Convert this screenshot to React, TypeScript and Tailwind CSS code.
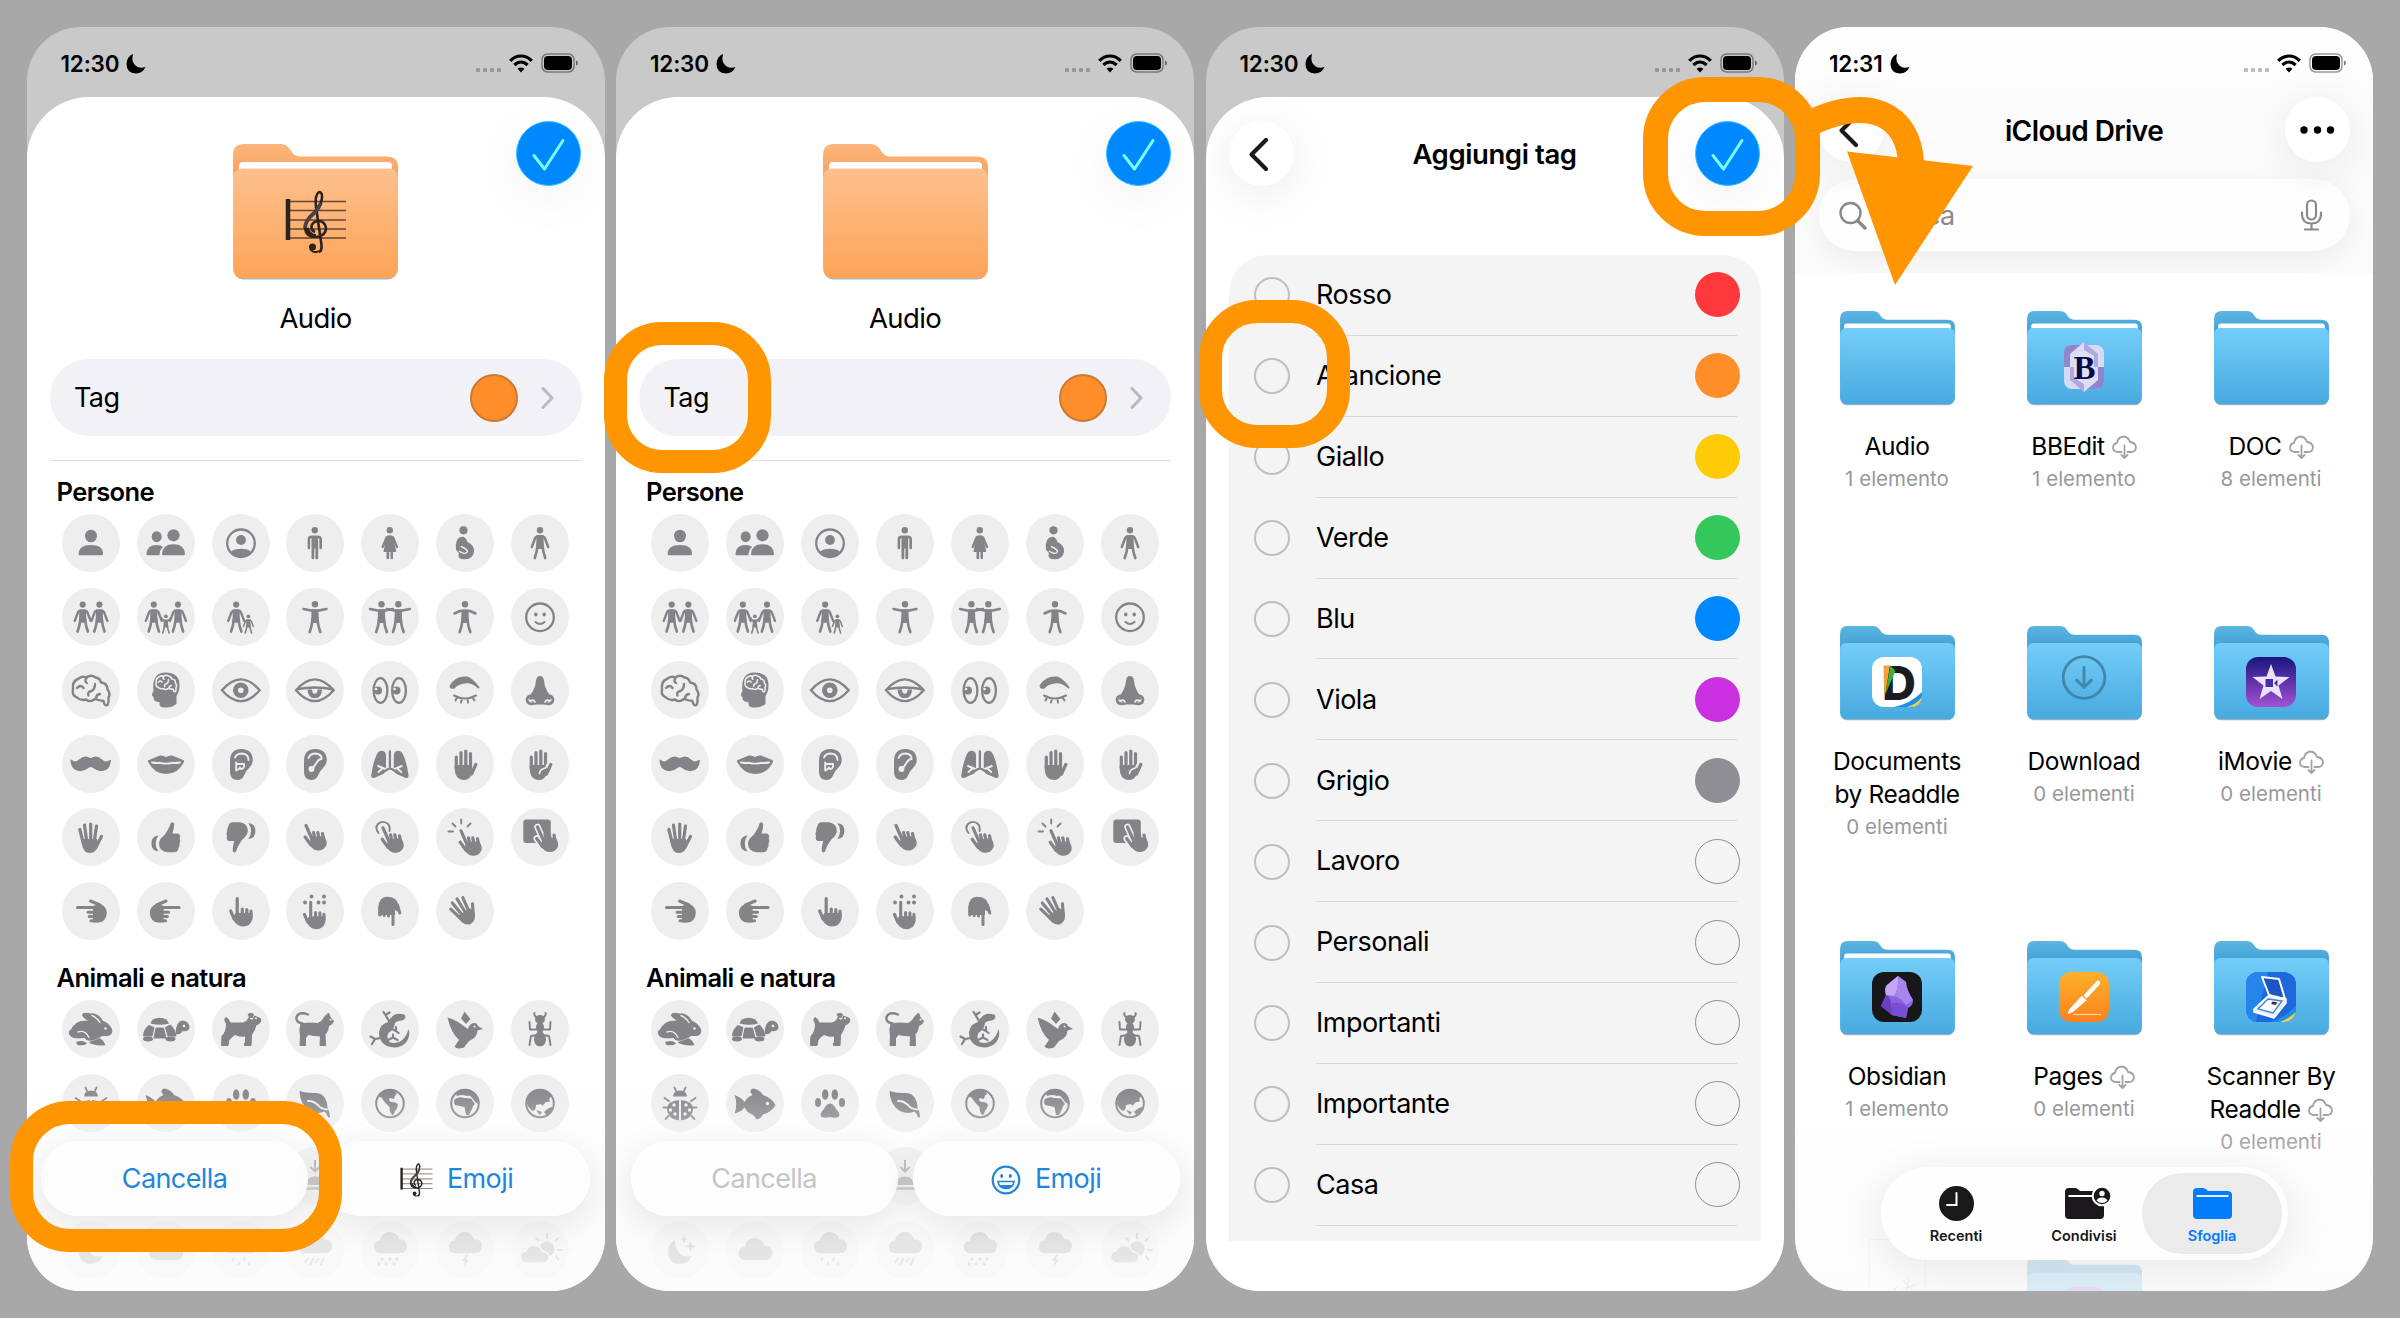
import type { ReactNode } from 'react';

const INK = '#838388';
const DISC = '#eeeeee';

/* ---------- status bar ---------- */

const StatusBar = ({ time }: { time: string }) => (
    <div className="h-[70px] shrink-0 flex items-center justify-between pl-[34px] pr-[26px] pb-[2px] pt-[4px]">
        <div className="flex items-center gap-[7px] pt-[1px]">
            <span className="pt-[2px] text-[22.500px] font-semibold tracking-[-0.2px] leading-none">{time}</span>
            <svg className="w-[20px] h-[20px]" viewBox="0 0 20 20">
                <path d="M7 0Q5 8 9.500 11.500Q13 15 19.500 13Q16.500 19.500 10 19.500Q.5 19 .5 10Q1 2.500 7 0Z" />
            </svg>
        </div>
        <div className="flex items-center gap-[8px]">
            <div className="flex gap-[3px] pt-[13px]">
                {[0, 1, 2, 3].map((i) => (
                    <span key={i} className="w-[4px] h-[4px] rounded-[1px] bg-black/25" />
                ))}
            </div>
            <svg className="w-[24px] h-[19px]" viewBox="0 0 24 19" fill="none" stroke="#000" strokeWidth="3.200">
                <path d="M1.200 6.800Q6 2 12 2T22.800 6.800" />
                <path d="M5.400 11Q8.500 8 12 8T18.600 11" />
                <path d="M12 18.500L8.600 14.800Q12 12 15.400 14.800Z" fill="#000" stroke="none" />
            </svg>
            <svg className="w-[38px] h-[20px]" viewBox="0 0 38 20">
                <rect x="1" y="1" width="32" height="18" rx="5.500" fill="none" stroke="#000" strokeOpacity=".4" strokeWidth="1.500" />
                <rect x="3" y="3" width="28" height="14" rx="4" />
                <path d="M35 7.500V12.500Q37 12 37 10T35 7.500Z" opacity=".5" />
            </svg>
        </div>
    </div>
);

/* ---------- folders ---------- */

const FolderShape = ({ tone, paper }: { tone: 'orange' | 'blue'; paper?: boolean }) => {
    const back = tone === 'orange' ? ['#fbb57b', '#f9a25c'] : ['#5cb5e2', '#3d9ed3'];
    const front = tone === 'orange' ? ['#fec08d', '#fea458'] : ['#74cdf8', '#47aae0'];
    return (
        <svg className="w-full h-full block overflow-visible" viewBox="0 0 165 135">
            <defs>
                <linearGradient id={`back-${tone}`} x1="0" y1="0" x2="0" y2="1">
                    <stop offset="0" stopColor={back[0]} />
                    <stop offset=".35" stopColor={back[1]} />
                </linearGradient>
                <linearGradient id={`front-${tone}`} x1="0" y1="0" x2="0" y2="1">
                    <stop offset="0" stopColor={front[0]} />
                    <stop offset="1" stopColor={front[1]} />
                </linearGradient>
            </defs>
            <rect x="1" y="60" width="163" height="75.500" rx="9" fill="#000" opacity=".3" />
            <path d="M0 11Q0 0 11 0H47Q53 0 56 4L60 9.500Q62.500 12.500 67 12.500H154Q165 12.500 165 23V100H0Z" fill={`url(#back-${tone})`} />
            {paper && <path d="M6 40V22Q6 18 10 18H155Q159 18 159 22V40Z" fill="#fff" />}
            <path d="M0 33Q1 25 9 24.500H156Q164 25 165 33V124Q165 134 155 134H10Q0 134 0 124Z" fill={`url(#front-${tone})`} />
        </svg>
    );
};

const Score = ({ className }: { className: string }) => (
    <svg className={className} viewBox="0 0 62 64" fill="none" stroke="#2b2320">
        <path d="M3 9V50" strokeWidth="4.500" />
        <path d="M4 11.500H61M4 20.500H61M4 30H61M4 39H61M4 48H61" strokeWidth="1.400" strokeOpacity=".75" />
        <path d="M34 62Q37 61 36.500 55L31 17Q29.500 5 34 2Q37.500 2 37 8Q36 16 29 23Q20 31 20 38Q21 47 31 47Q41 46 41 38Q40 31 33 31Q26 32 26.500 38Q27 41 30 42" strokeWidth="2.600" />
        <path d="M36 13Q34 18 29 23Q20 31 20 38" strokeWidth="3.800" stroke="#4b4340" />
        <path d="M22 38Q24 46 31 46" strokeWidth="3.600" />
        <circle cx="27.500" cy="57" r="3.500" fill="#2b2320" stroke="none" />
        <path d="M25 59Q29 64 34 61" strokeWidth="2" />
    </svg>
);

/* ---------- glyphs, each drawn in a 58x58 disc ---------- */

type Arms = 'down' | 'out' | 'half' | 'up';

const armPaths: Record<Arms, string> = {
    down: 'M-8.200 4L-5 -4.500Q-4 -6.700 -1.500 -6.700H1.500Q4 -6.700 5 -4.500L8.200 4',
    out: 'M-11.500 -8L-4 -6.500H4L11.500 -8',
    half: 'M-10.500 -3.500L-5 -6H5L10.500 -3.500',
    up: 'M-7.500 -10.500L-3.500 -5H3.500L7.500 -10.500',
};

const Figure = ({ x = 29, y = 29, s = 1, arms = 'down' }: { x?: number; y?: number; s?: number; arms?: Arms }) => (
    <g transform={`translate(${x} ${y}) scale(${s})`} stroke={INK} fill={INK} strokeLinecap="round" strokeLinejoin="round">
        <circle cy="-12.800" r="3.200" stroke="none" />
        <path d={armPaths[arms]} fill="none" strokeWidth="2.500" />
        <path d="M-3.500 -7.500H3.500L3.800 4L1.500 6H-1.500L-3.800 4Z" stroke="none" />
        <path d="M-2.400 2Q-3 9 -5.300 15M2.400 2Q3 9 5.300 15" fill="none" strokeWidth="2.700" />
    </g>
);

const PointHand = () => (
    <g stroke={INK} fill={INK} strokeLinecap="round" strokeLinejoin="round">
        <path d="M20 17.500L26 31M27.500 24.500L29 31M31.800 24.500L33 31M36.500 25.500L37.500 31M19.200 29L25 37" fill="none" strokeWidth="3.200" />
        <path d="M25 29L38 28Q41.500 33 40.500 37Q38 42.500 32 42.500Q27.500 42.500 23.500 37Z" stroke="none" />
    </g>
);

const UpHand = () => (
    <g stroke={INK} fill={INK} strokeLinecap="round" strokeLinejoin="round">
        <path d="M25.200 16.500V34M30.300 27V34M34.800 27.500V34M39 29V35M18.700 29L22 37" fill="none" strokeWidth="3.200" />
        <path d="M23.500 31H40.500V37Q38.500 44.500 31 44.500Q24 44.500 20.500 36Z" stroke="none" />
    </g>
);

const SideHand = () => (
    <g stroke={INK} fill={INK} strokeLinecap="round" strokeLinejoin="round">
        <path d="M15.500 25.500H34M28.500 19L38 23M26 30.200H34M27.200 34.500H34M29 38.800H36" fill="none" strokeWidth="3" />
        <path d="M31 24L37 21.500Q44.800 24 44.800 31Q44 40.500 36 40.500H31Z" stroke="none" />
    </g>
);

const OpenHand = ({ spread }: { spread?: boolean }) => (
    <g stroke={INK} fill={INK} strokeLinecap="round" strokeLinejoin="round">
        <path
            d={spread
                ? 'M17.800 21.500L21 34M22.500 17L24.500 32M28.700 16V32M34.500 18L32.500 32M39.500 28.500L34 39'
                : 'M20.300 22V33M25 17.500V32M29.800 16V32M34.500 18.500V33M39.800 29.500L35.500 39'}
            fill="none"
            strokeWidth="3.200"
        />
        <path d={spread ? 'M19 31H35L36.500 37Q34 45 28 45Q21 45 19.600 35Z' : 'M18.700 30H36V38Q34 45 28.500 45Q18.700 45 18.700 33Z'} stroke="none" />
    </g>
);

const Ring = () => <circle cx="29" cy="29.300" r="13.800" fill="none" stroke={INK} strokeWidth="2.300" />;

const Brain = () => (
    <g fill="none" strokeLinecap="round" strokeLinejoin="round">
        <path d="M15 36.500Q9.500 34 11 28.500Q10 20 16 18Q20 14.500 24 16.500Q29 13 33.500 16.500Q38 17 39 21.500Q45.500 22 45.500 28.500Q49 33 46.500 36.500Q47 41 45.500 44Q42.500 45.500 41.500 40Q37 39.500 33 38Q28 42 24 38.500Q18.500 40 15 36.500Z" />
        <path d="M15 27Q19 23 21.500 27M24.500 17Q22 20.500 25 22M33 23Q33 28 29.500 30Q25 31 26.500 34.500M34 38Q34 33.500 38 33" />
    </g>
);

const Ear = ({ children }: { children: ReactNode }) => (
    <>
        <path d="M18 26Q18 14 29.500 14Q40.700 14.500 40.700 25Q40.700 30 37 33Q33.500 36 32 40.500Q30 45 25 45Q18 44.500 18 37Z" />
        <g fill="none" stroke={DISC} strokeWidth="1.900" strokeLinecap="round">{children}</g>
    </>
);

const people: ReactNode[] = [
    <>
        <ellipse cx="29" cy="22" rx="6" ry="6.300" />
        <path d="M16.600 40Q17 31 29 31T41 40Q41 41.300 39.500 41.300H18Q16.600 41.300 16.600 40Z" />
    </>,
    <>
        <circle cx="36.500" cy="21.300" r="6.100" />
        <path d="M25 40Q25.500 30.300 36.500 30.300T48 40Q48 41.300 46.500 41.300H26.500Q25 41.300 25 40Z" />
        <ellipse cx="19.700" cy="22.700" rx="5" ry="5.500" />
        <path d="M9.400 40Q10 31 19.500 31Q24 31 26 33Q22.500 36 22.500 41.300H11Q9.400 41.300 9.400 40Z" />
    </>,
    <>
        <Ring />
        <circle cx="29" cy="26" r="4.900" />
        <path d="M19 38Q22 34.800 29 34.800T39 38Q35 43 29 43T19 38Z" />
    </>,
    <>
        <circle cx="28.800" cy="16.300" r="3.200" />
        <path d="M22.900 34V25.500Q22.900 22.800 26 22.800H31.600Q34.700 22.800 34.700 25.500V34" fill="none" stroke={INK} strokeWidth="2.600" strokeLinecap="round" />
        <path d="M25.500 22H32.200V44Q32.200 45.300 30.800 45.300Q29.400 45.300 29.400 44V34.500H28.300V44Q28.300 45.300 26.900 45.300Q25.500 45.300 25.500 44Z" />
    </>,
    <>
        <circle cx="28.800" cy="16.300" r="3.200" />
        <path d="M21.700 33L25.500 23.500Q28.800 21.500 32.100 23.500L36 33" fill="none" stroke={INK} strokeWidth="2.400" strokeLinecap="round" />
        <path d="M25.500 22.500H32L35.300 38H32V44.500Q30.500 46 29.500 44.500V38H28.200V44.500Q27 46 25.500 44.500V38H22.400Z" />
    </>,
    <>
        <circle cx="27.500" cy="16.300" r="4.100" />
        <path d="M21 26Q24 21.500 28 23Q31 25 31.500 28Q38.500 31 38 38Q36.500 45.500 29 45.200Q22 45.500 22.500 41Q24 39 20 36Q19 31 21 26Z" />
        <path d="M23 37Q29 41.500 31.500 37.500Q31.500 35.500 25 32.500" fill="none" stroke={DISC} strokeWidth="1.400" />
    </>,
    <Figure />,
    <><Figure x={20.700} s={0.97} /><Figure x={37.400} s={0.97} /></>,
    <><Figure x={16.800} s={0.97} /><Figure x={41} s={0.97} /><Figure x={28.900} y={36} s={0.6} arms="up" /></>,
    <><Figure x={24.200} s={0.97} /><Figure x={36.400} y={36} s={0.6} /></>,
    <Figure arms="out" />,
    <><Figure x={20.500} arms="out" /><Figure x={37.300} arms="out" /></>,
    <Figure arms="half" />,
    <>
        <Ring />
        <ellipse cx="24.800" cy="26.500" rx="1.700" ry="2.100" />
        <ellipse cx="33.200" cy="26.500" rx="1.700" ry="2.100" />
        <path d="M24.500 34Q29 38 33.500 34" fill="none" stroke={INK} strokeWidth="2" strokeLinecap="round" />
    </>,
    <g stroke={INK} strokeWidth="2.400"><Brain /></g>,
    <>
        <path d="M28 11.500Q42.500 11.500 42.500 24Q42.500 31 39.500 35V43Q33 48 24.500 46Q22 45 22.500 41Q16 41 16.500 36Q13.500 34 16.500 30Q14.500 12 28 11.500Z" />
        <g stroke={DISC} strokeWidth="2.800" transform="translate(13 6) scale(.56)"><Brain /></g>
    </>,
    <>
        <path d="M10 29.300Q28.800 7.500 47.700 29.300Q28.800 51 10 29.300Z" fill="none" stroke={INK} strokeWidth="2.300" />
        <circle cx="28.800" cy="29.300" r="5.300" fill="none" stroke={INK} strokeWidth="5" />
    </>,
    <>
        <path d="M10 29.300Q28.800 7.500 47.700 29.300Q28.800 51 10 29.300ZM10 28.500Q28.800 24.500 47.700 28.500" fill="none" stroke={INK} strokeWidth="2.300" />
        <path d="M23.800 28.500Q24 35 28.800 35T33.800 28.500" fill="none" stroke={INK} strokeWidth="4.500" />
    </>,
    <>
        <ellipse cx="19.500" cy="29.500" rx="6.900" ry="12.400" fill="none" stroke={INK} strokeWidth="2.300" />
        <ellipse cx="38" cy="29.500" rx="6.900" ry="12.400" fill="none" stroke={INK} strokeWidth="2.300" />
        <circle cx="17" cy="29.500" r="4" /><circle cx="35.500" cy="29.500" r="4" />
        <circle cx="15" cy="28" r="1.300" fill={DISC} /><circle cx="33.500" cy="28" r="1.300" fill={DISC} />
    </>,
    <>
        <path d="M14.500 25Q20 15.500 31 16.500Q37 19 42.500 26.500Q36 20.500 29 21.500Q22 22 18 26.500Q14.500 27.500 14.500 25Z" stroke={INK} strokeWidth="2" strokeLinejoin="round" />
        <path d="M18 34.500Q29 40.500 40 34.500M21 36.500L19.500 39.500M26 37.800L25 41.500M31.500 37.800L32 41.500M36.500 36.500L38.500 39.500" fill="none" stroke={INK} strokeWidth="2" strokeLinecap="round" />
    </>,
    <>
        <path d="M28.900 15Q32.500 15 33 20Q34 28 38 33L40 38L34 43.500H24L18 38L20 33Q24 28 25 20Q25.500 15 28.900 15Z" />
        <path d="M23.500 42.500Q16.500 44 16 38.500Q17 34 21 35M34.500 42.500Q41.500 44 42 38.500Q41 34 37 35" fill="none" stroke={INK} strokeWidth="2.800" strokeLinecap="round" />
        <path d="M19.500 39.500Q23 38.500 24 41M38.500 39.500Q35 38.500 34 41" fill="none" stroke={DISC} strokeWidth="1.700" strokeLinecap="round" />
    </>,
    <path d="M8.500 25Q8.500 24 10 25Q13 28 17 24.500Q22 20.500 26 22Q28 23 28.700 23Q29.400 23 31.500 22Q36 20.500 40 24.500Q44 28 47.500 25Q49 24 48.800 26Q48 33 44 35Q37 38 31 33Q28.700 31 26.500 33Q20 38 13.500 35Q9 33 8.500 25Z" />,
    <>
        <path d="M10.700 26Q11 25 13 24.500Q19 22 23 20.500Q26 20 29 22Q32 20 35 20.500Q39 22 45 24.500Q47.500 25 47 27Q41 39 29 39T10.700 26Z" />
        <path d="M15 27.500Q20 28.300 23 27.800Q29 29.500 35 27.800Q39 28.300 43 27.500" fill="none" stroke={DISC} strokeWidth="1.900" strokeLinecap="round" />
    </>,
    <Ear><path d="M23 22.500Q24.500 18.500 30 18.500Q36.500 19 36.500 25M24.200 27.500V35.500M24.200 29H32Q32.500 34 29 34M24.200 35Q27 35 28 32.500" /></Ear>,
    <Ear>
        <path d="M22.500 23Q24 18.500 30 18.500Q36 19.500 35.500 24Q33 24 31 27Q28 32 26 34" />
        <circle cx="25.500" cy="34" r="2" fill={DISC} />
    </Ear>,
    <>
        {['', 'translate(57.800 0) scale(-1 1)'].map((t) => (
            <g key={t} transform={t}>
                <path d="M15.500 20Q17 15.700 21 15.700Q25 16 25 21V35Q24.500 38 21 39.500L13 43Q9.500 43.500 10.400 39.500Q12 28 15.500 20Z" />
                <path d="M17 31L25.500 34.500M17.500 37L22 33" fill="none" stroke={DISC} strokeWidth="1.900" strokeLinecap="round" />
            </g>
        ))}
        <path d="M28.900 16.500V33.500M24.500 35.500L28.900 33L33.300 35.500" fill="none" stroke={INK} strokeWidth="2.300" strokeLinecap="round" />
    </>,
    <OpenHand />,
    <><OpenHand /><path d="M28.500 38.500Q28.500 35 33 33.500Q35.500 33 36 29.500" fill="none" stroke={DISC} strokeWidth="1.700" strokeLinecap="round" /></>,
    <OpenHand spread />,
    <>
        <path d="M27.500 27Q32.500 20 33.500 15.500Q35.500 12.700 37.200 15.800Q37.300 20 35.500 25.500H41Q44.200 27 42.700 30.500Q44 33 42.500 35.500Q43 38.500 41.500 40Q41 44.300 37 44.300H30Q22 43 22 35.500Q22 31 27.500 27Z" />
        <path d="M21.500 27.500Q14.400 28 14.400 35.500T21.500 43.300Q18.700 40 18.700 35.500T21.500 27.500Z" />
    </>,
    <g transform="rotate(180 28.900 29.300)">
        <path d="M27.500 27Q32.500 20 33.500 15.500Q35.500 12.700 37.200 15.800Q37.300 20 35.500 25.500H41Q44.200 27 42.700 30.500Q44 33 42.500 35.500Q43 38.500 41.500 40Q41 44.300 37 44.300H30Q22 43 22 35.500Q22 31 27.500 27Z" />
        <path d="M21.500 27.500Q14.400 28 14.400 35.500T21.500 43.300Q18.700 40 18.700 35.500T21.500 27.500Z" />
    </g>,
    <PointHand />,
    <>
        <g transform="translate(2 2.300)"><PointHand /></g>
        <path d="M17.500 25Q13.500 20 17 16Q21.500 12 26.500 15.500Q29.500 18.500 28.500 23" fill="none" stroke={INK} strokeWidth="1.900" strokeLinecap="round" />
    </>,
    <>
        <g transform="translate(5 5.300)"><PointHand /></g>
        <path d="M12.500 23.500H17M16.500 15.500L19.500 18.500M25.200 11.500V15.500M34.500 15.500L31.500 18.500" fill="none" stroke={INK} strokeWidth="1.900" strokeLinecap="round" />
    </>,
    <>
        <rect x="12.300" y="11.500" width="27.500" height="23.500" rx="3" />
        <g transform="translate(6.500 1.500)" stroke={DISC} strokeLinecap="round"><path d="M20 17.500L26 31M19.200 29L25 37" fill="none" strokeWidth="6.500" /></g>
        <g transform="translate(6.500 1.500)"><PointHand /></g>
    </>,
    <SideHand />,
    <g transform="translate(57.600 0) scale(-1 1)"><SideHand /></g>,
    <UpHand />,
    <>
        <g transform="translate(.5 4.500) scale(.96)"><UpHand /></g>
        {[[25.500, 14.500], [38, 14.500], [19, 20.500], [32.500, 20.500], [38, 20.500]].map(([x, y]) => (
            <circle key={`${x}-${y}`} cx={x} cy={y} r="1.900" />
        ))}
    </>,
    <>
        <path d="M17.400 25Q18 15 26 14.700Q36 15 37 22L39.500 31L34 28V33H17.400Z" />
        <path d="M18.900 25V33M23.200 28V33.500M27.500 28V34M32 27V42.500M36.500 23L38.800 31" fill="none" stroke={INK} strokeWidth="3" strokeLinecap="round" />
    </>,
    <g transform="rotate(-32 29 30) translate(1 -1) scale(.98)"><OpenHand spread /></g>,
];

const Globe = ({ children }: { children: ReactNode }) => (
    <>
        <circle cx="29" cy="29.500" r="13.800" fill="none" stroke={INK} strokeWidth="2" />
        {children}
    </>
);

const Cloud = ({ y = 0, s = 1 }: { y?: number; s?: number }) => (
    <path transform={`translate(${29 - 29 * s} ${y}) scale(${s})`} d="M20 39Q12.500 39 12.500 32.500Q12.500 26.500 18.500 26Q20 17.500 28 17Q36 17 38.500 24.500Q46.500 24.500 46.500 32Q46 39 39 39Z" />
);

const nature: ReactNode[] = [
    <>
        <path d="M8 35Q6 31 9.500 29.500Q12 23.500 19 21.500Q26 20 31 22.500Q24 20 21 16.500Q19 12.500 26 13.500Q34 14.500 39 21Q46 22 49.500 29Q51 35 45 35.500H40Q36 39 30 40Q25 41 22.500 37.500Q10 39 8 35Z" stroke={INK} strokeLinejoin="round" />
        <path d="M29 14.500Q35 17 38.500 22.500Q41 23 41 21Q38 14.500 30 13Z" />
        <path d="M16 32Q23 29.500 27 37.500M30 15.500Q35.500 18 38 22.500" fill="none" stroke={DISC} strokeWidth="1.400" strokeLinecap="round" />
        <path d="M15 42.500Q21 40.500 24 43.500Q22 45 16 44.500ZM28 42.500L38 39Q41 41 42.500 44.500Q36 45.500 28 42.500Z" stroke={INK} strokeWidth="1.500" strokeLinejoin="round" />
        <circle cx="43.500" cy="28.500" r="1.200" fill={DISC} />
    </>,
    <>
        <path d="M13.500 23.500Q15 18 22.500 17.800Q30 18 32 23.500Q23 26 13.500 23.500Z" />
        <path d="M12 25.500L17 27.500L15 36H6.500Q7 29 12 25.500ZM19 28H26.500L29 38H17ZM28.500 27.500L33.500 25Q38 29 39 36H31Z" stroke={INK} strokeWidth="1" strokeLinejoin="round" />
        <path d="M38.500 34Q38.500 21.500 45.500 20.500Q52.500 21 52.500 28Q51 32 45.500 31Q43.500 35 38.500 34Z" />
        <ellipse cx="11" cy="39" rx="5" ry="2.400" /><ellipse cx="33.500" cy="39" rx="5" ry="2.400" />
        <circle cx="47" cy="26" r="1.300" fill={DISC} />
    </>,
    <>
        <path d="M14.500 24Q11.500 19 14 17.500Q17 18.500 18 23H31Q35.500 22 37 17.500L38.500 20L41 20L42.500 16L48.500 18.500Q50 23 44 25Q43 30 39.500 35L39 45.500H32.500V43L33.500 42.500V36Q27 37 23 34.500Q19 37 17 40L16 45.500H9.500L10 36Q14.500 32 14.500 24Z" stroke={INK} strokeLinejoin="round" />
        <path d="M35.500 14Q40 12 42 14.500L40.500 18H37.500Z" />
        <circle cx="44" cy="18.300" r="1" fill={DISC} />
    </>,
    <>
        <path d="M22 14.500Q13 11 10.500 17Q9.500 22.500 16.500 23.500" fill="none" stroke={INK} strokeWidth="2.400" strokeLinecap="round" />
        <path d="M15 24Q21 22.500 32 23.500Q37 21 38.500 17L42.500 13L44.500 18L47.500 21Q47 24 42.500 26Q42.500 31 39 34.500L39.500 45.500H34L34.500 36Q26 35.500 22.500 34.500L19.500 38V45.500H14L14.500 36Q13 29 15 24Z" stroke={INK} strokeLinejoin="round" />
        <circle cx="44.500" cy="19.800" r="1" fill={DISC} />
    </>,
    <>
        <path d="M27 22Q29 18 33 15Q38 12.500 44 15Q45.500 18.500 41 20.500Q36 20.500 34 23Q33.500 29 27.500 33Q25 38 28.500 42Q34 44.500 40 41Q45.500 37 47.500 29Q50 36 44.500 43Q37 50 26 46Q17.500 42 18 32Q19.500 24 27 22Z" />
        <path d="M28 21L24.500 15L22.500 12M24.500 15L28.500 12.500M31 29L35 31L35 27M35 31L37.500 33M20 38L14 39M14 39L9.500 36.500M14 39L11 44M27 40L32 37.500L36.500 40M32 37.500V34.500" fill="none" stroke={INK} strokeWidth="2.200" strokeLinecap="round" strokeLinejoin="round" />
    </>,
    <>
        <path d="M11.500 17.500Q22 21 27 25.500L32 29Q33 24 37.500 23Q41 22.500 42 26L47 29L41.500 30.500Q41 38 33 41L28 47.500Q21 50 18.500 46.500L23 40Q15 33 11.500 17.500Z" />
        <path d="M25 18.500L28.500 11.500L34.500 19L30 24Z" />
        <circle cx="38.500" cy="26.500" r="1" fill={DISC} />
    </>,
    <>
        <path d="M29 15Q34 15 34 20Q33 22.500 31.500 23.500Q34.500 26 31.500 32Q35.500 36 35 40Q34 46.500 29 46.500T23 40Q22.500 36 26.500 32Q23.500 26 26.500 23.500Q25 22.500 24 20Q24 15 29 15Z" />
        <path d="M25 17Q22.500 15 23.500 13M33 17Q35.500 15 34.500 13M26 29.500H19L18.500 22M32 29.500H39L39.500 22M26 35L20 36L18.500 45M32 35L38 36L39.500 45" fill="none" stroke={INK} strokeWidth="1.900" strokeLinecap="round" strokeLinejoin="round" />
    </>,
    <>
        <path d="M22 22.500Q22.500 16.500 29 16.500T36 22.500ZM15.800 35Q16 27 28 26V46.500Q16.500 45 15.800 35ZM42.200 35Q42 27 30 26V46.500Q41.500 45 42.200 35Z" />
        <path d="M25 17L23.500 13.500M33 17L34.500 13.500M18 27L13.500 24M40 27L44.500 24M16 33.500H12.500M42 33.500H45.500M17.500 42L14.500 45M40.500 42L43.500 45" fill="none" stroke={INK} strokeWidth="1.800" strokeLinecap="round" />
        {[[23, 31], [19.500, 36], [24, 40], [35, 31], [38.500, 36], [34, 40]].map(([x, y]) => (
            <circle key={`${x}-${y}`} cx={x} cy={y} r="1.700" fill={DISC} />
        ))}
    </>,
    <>
        <path d="M8.500 21Q16 24 18.500 28Q21 23 26.500 21Q22 16.500 27 14.500Q34 15.500 37 21Q46 24 49.500 31Q46 38 37 40.500Q34 46 30 45Q29 41 24 39.500Q20 37 18.500 33.500Q15 38 8.500 39.500Q12 30 8.500 21Z" />
        <circle cx="41.500" cy="29.500" r="1.700" fill={DISC} />
    </>,
    <>
        <path d="M29 29.500Q33 30 35 35Q39.500 39 38 42.500Q36 44.500 29 43Q22 44.500 20 42.500Q18.500 39 23 35Q25 30 29 29.500Z" />
        <ellipse cx="24.200" cy="20.500" rx="3.200" ry="5.300" /><ellipse cx="33.800" cy="20.500" rx="3.200" ry="5.300" />
        <ellipse cx="17" cy="28.500" rx="3" ry="4.500" /><ellipse cx="41" cy="28.500" rx="3" ry="4.500" />
    </>,
    <>
        <path d="M13.500 17Q20 19.500 30 19Q41 20 41.500 34Q43.500 37 44 43Q42.500 44.500 41.500 42Q40.500 38.500 38.500 37.500Q32 40.500 24 37Q14 31 13.500 17Z" />
        <path d="M22 27Q27 26.500 32 31Q35 35 41 35.500" fill="none" stroke={DISC} strokeWidth="1.900" strokeLinecap="round" />
    </>,
    <Globe><path d="M17 22Q22 14.500 32 16L36 19.500Q33 22 33 25L28.500 24Q27 27 31 28Q36 28 37 31Q36 35 34 37Q33 41 31 41Q28 37 28.500 33Q23 28 21 24Z" /></Globe>,
    <Globe><path d="M20 20Q26 13.500 35 16.500Q42 20 42 30Q39 29 37 25Q34 20 31 22Q26 20 21 22ZM19 25Q24 22 28 24L35 24.500L39 30Q36 32 36 35L33 41H30L28.500 33Q24 32 19 31Q17 28 19 25Z" /></Globe>,
    <Globe><path d="M15.500 29Q16 15.500 29 15.500Q37 16 41 22Q37 24 39 28Q35 27 33 30Q31 33 30 30L25 31Q25 36 22 37Q18 35 15.500 29ZM25 36L31 38L29 41ZM33 38Q38 33 42 33Q41 40 36 42Z" /></Globe>,
    null,
    null,
    null,
    <>
        <path d="M29 13V24M24.500 20L29 24.500L33.500 20" fill="none" stroke={INK} strokeWidth="2" />
        <path d="M20.500 38Q20.500 29.500 29 29.500T37.500 38Z" />
        <path d="M14 41.500H44" stroke={INK} strokeWidth="2.500" />
    </>,
    null,
    null,
    null,
    <>
        <path d="M24 19Q17 23 17 31Q18 43 29 43Q37 43 40.500 35Q25 38 24 19Z" />
        <path d="M33 14L34.200 17L37 18L34.200 19L33 22L31.800 19L29 18L31.800 17ZM39.500 20L41 24L45 25.500L41 27L39.500 31L38 27L34 25.500L38 24Z" />
    </>,
    <Cloud />,
    <><Cloud y={-5.500} s={0.97} /><path d="M22 37L20 40M27.500 41L26 44M33 37L31.500 40M38 41L36.500 44" stroke={INK} strokeWidth="1.700" /></>,
    <><Cloud y={-5.500} s={0.97} /><path d="M22 37L19 42M27.500 37L24 44M33 37L29.500 42M38 37L34.500 44" stroke={INK} strokeWidth="1.700" /></>,
    <>
        <Cloud y={-5.500} s={0.97} />
        {[[21, 38], [29, 38], [36, 38], [18, 43], [25, 43], [33, 43]].map(([x, y]) => <circle key={`${x}-${y}`} cx={x} cy={y} r="1.700" />)}
    </>,
    <><Cloud y={-5.500} s={0.97} /><path d="M30 34L25.500 40H29L27.500 45.500L33 38.500H29.500L32 34Z" /></>,
    <>
        <circle cx="36" cy="28" r="7.500" />
        <path d="M36 17V13M44.500 20L47.500 17M47 29H51M45 35.500L47.500 38.500M27.500 19.500L25 17" stroke={INK} strokeWidth="2" strokeLinecap="round" />
        <path d="M16 42Q9.500 41.500 9.500 35.500Q10 30.500 15 30Q17 24 23.500 24.500Q30 25 31.500 30.500Q38 31 38 36.500Q37.500 42 31.500 42Z" stroke={DISC} strokeWidth="1.500" />
    </>,
];

const GlyphGrid = ({ glyphs }: { glyphs: ReactNode[] }) => (
    <div className="ml-[27px] w-[524px] grid grid-cols-7 auto-rows-[73.500px] justify-items-center">
        {glyphs.map((glyph, i) => (
            <div key={i} className="w-[58px] h-[58px] rounded-full bg-[#eeeeee]">
                <svg className="w-full h-full" viewBox="0 0 58 58" fill={INK}>{glyph}</svg>
            </div>
        ))}
    </div>
);

/* ---------- shared controls ---------- */

const CheckButton = () => (
    <div className="w-[65px] h-[65px] rounded-full bg-[#0088ff] border border-[#2fc0ff] shadow-[0_12px_40px_8px_rgba(0,0,0,0.04)]">
        <svg viewBox="0 0 63 63" fill="none" stroke="#7dfcff" strokeWidth="3" strokeLinecap="round" strokeLinejoin="round">
            <path d="M17 33.500L27.500 47L46 18.500" />
        </svg>
    </div>
);

const RoundButton = ({ children }: { children: ReactNode }) => (
    <div className="w-[65px] h-[65px] rounded-full bg-white shadow-[0_8px_40px_8px_rgba(0,0,0,0.055)]">
        <svg viewBox="0 0 65 65">{children}</svg>
    </div>
);

const backChevron = <path d="M37 19L22.500 33.500L37 48" fill="none" stroke="#1a1a1a" strokeWidth="4.200" strokeLinecap="round" strokeLinejoin="round" />;

const Phone = ({ time, light, children }: { time: string; light?: boolean; children: ReactNode }) => (
    <div className={`relative w-[578px] h-[1264px] shrink-0 rounded-[54px] overflow-hidden flex flex-col ${light ? 'bg-white' : 'bg-[#c9c9c9]'}`}>
        {light && <div className="absolute inset-x-0 top-0 h-[246px] bg-gradient-to-b from-[#fdfdfd] to-[#fafafa]" />}
        <div className="relative">
            <StatusBar time={time} />
        </div>
        {children}
    </div>
);

const SectionTitle = ({ children }: { children: ReactNode }) => (
    <h2 className="h-[45px] pl-[30px] pt-[2px] flex items-center text-[25.500px] font-semibold tracking-[-0.6px]">{children}</h2>
);

/* ---------- screens ---------- */

const IconPicker = ({ selected }: { selected?: boolean }) => (
    <Phone time="12:30">
        <div className="relative flex-1 rounded-t-[62px] bg-white">
            <div className="absolute right-[23.500px] top-[24px]">
                <CheckButton />
            </div>
            <div className="h-[262px] pt-[47px] flex flex-col items-center">
                <div className="relative w-[165px] h-[135px]">
                    <FolderShape tone="orange" paper />
                    {selected && <Score className="absolute left-[52px] top-[46px] w-[62px] h-[64px]" />}
                </div>
                <div className="mt-[20px] text-[27.500px] leading-[38px] tracking-[-0.6px]">Audio</div>
            </div>
            <div className="mx-[23px] h-[77px] rounded-[38px] bg-[#f2f1f6] flex items-center pl-[24.500px] pr-[28px]">
                <span className="pt-[2px] text-[27px] tracking-[-0.6px]">Tag</span>
                <span className="ml-auto w-[48px] h-[48px] rounded-full bg-[#ff8d2a] border-2 border-[#cc7a33]" />
                <svg className="ml-[23px] w-[13px] h-[24px]" viewBox="0 0 13 24" fill="none" stroke="#b9b9be" strokeWidth="3" strokeLinecap="round" strokeLinejoin="round">
                    <path d="M2 2.500L11 12L2 21.500" />
                </svg>
            </div>
            <div className="mx-[23px] mt-[24px] mb-[8px] h-px bg-[#dfdfe1]" />
            <SectionTitle>Persone</SectionTitle>
            <GlyphGrid glyphs={people} />
            <SectionTitle>Animali e natura</SectionTitle>
            <GlyphGrid glyphs={nature} />
        </div>
        <div className="absolute inset-x-0 bottom-0 h-[210px] bg-gradient-to-b from-white/0 via-[#fafafa]/60 via-45% to-[#fbfbfb]/82 to-75%" />
        <div className="absolute inset-x-0 bottom-0 h-[150px] pl-[14.500px] flex gap-[15px] text-[27px] tracking-[-0.6px] text-[#1f86dc]">
            <div className={`w-[267px] h-[75px] pt-[2px] rounded-full bg-[#fdfdfd]/95 border border-white shadow-[0_10px_34px_4px_rgba(0,0,0,0.07)] flex items-center justify-center ${selected ? '' : 'text-[#c4c4c6]'}`}>
                Cancella
            </div>
            <div className="w-[267px] h-[75px] pt-[2px] rounded-full bg-[#fdfdfd]/95 border border-white shadow-[0_10px_34px_4px_rgba(0,0,0,0.07)] flex items-center justify-center gap-[14px]">
                {selected ? (
                    <Score className="w-[33px] h-[36px]" />
                ) : (
                    <svg className="w-[30px] h-[30px]" viewBox="0 0 30 30" fill="none" stroke="#1f86dc" strokeWidth="2.200">
                        <circle cx="15" cy="15" r="13.300" />
                        <ellipse cx="10.700" cy="11" rx="1.500" ry="2" fill="#1f86dc" stroke="none" />
                        <ellipse cx="19.300" cy="11" rx="1.500" ry="2" fill="#1f86dc" stroke="none" />
                        <path d="M7 16.500H23Q22 23.500 15 23.500T7 16.500Z" strokeWidth="1.700" />
                        <path d="M8.500 20H21.500Q19 23.500 15 23.500T8.500 20Z" fill="#1f86dc" stroke="none" />
                    </svg>
                )}
                <span>Emoji</span>
            </div>
        </div>
    </Phone>
);

const tags = [
    { name: 'Rosso', color: 'bg-[#ff383c]' },
    { name: 'Arancione', color: 'bg-[#ff8d28]' },
    { name: 'Giallo', color: 'bg-[#fecb05]' },
    { name: 'Verde', color: 'bg-[#34c759]' },
    { name: 'Blu', color: 'bg-[#0088ff]' },
    { name: 'Viola', color: 'bg-[#cb30e0]' },
    { name: 'Grigio', color: 'bg-[#8e8e93]' },
    { name: 'Lavoro' },
    { name: 'Personali' },
    { name: 'Importanti' },
    { name: 'Importante' },
    { name: 'Casa' },
];

const TagList = () => (
    <Phone time="12:30">
        <div className="flex-1 rounded-t-[62px] bg-white">
            <div className="h-[158px] pt-[24px] px-[23.500px] flex items-start justify-between">
                <RoundButton>{backChevron}</RoundButton>
                <h1 className="h-[65px] pt-[2px] flex items-center text-[27.500px] font-semibold tracking-[-0.4px]">Aggiungi tag</h1>
                <CheckButton />
            </div>
            <ul className="mx-[23px] h-[986px] rounded-t-[38px] bg-[#f4f4f4]">
                {tags.map((tag) => (
                    <li key={tag.name} className="h-[80.900px] pl-[25.500px] flex items-center">
                        <span className="w-[36px] h-[36px] rounded-full border-[2.500px] border-[#bfbfc2]" />
                        <div className="ml-[26px] mr-[24px] h-full flex-1 flex items-center justify-between border-b border-[#d8d8da]">
                            <span className="pt-[1px] text-[27px] tracking-[-0.5px]">{tag.name}</span>
                            <span className={`-mr-[3px] w-[45px] h-[45px] rounded-full ${tag.color ?? 'border-[1.500px] border-[#8e8e93]'}`} />
                        </div>
                    </li>
                ))}
            </ul>
        </div>
    </Phone>
);

const CloudDown = () => (
    <svg className="inline-block ml-[7px] w-[25px] h-[24px] align-[-4px]" viewBox="0 0 25 24" fill="none" stroke="#a2a2a5" strokeWidth="1.800" strokeLinecap="round" strokeLinejoin="round">
        <path d="M9.500 17H5.500Q1 16.500 1 12.500Q1.500 8.500 5 8Q6 2 11.500 1.500Q16.500 2 18 7Q23.500 7.500 24 12.500Q23.500 17 19 17H15.500M12.500 10.500V23M9.500 20L12.500 23L15.500 20" />
    </svg>
);

const BBEditIcon = () => (
    <svg className="overflow-visible" viewBox="0 0 50 50">
        <rect x="5" y="3" width="40" height="44" rx="8" fill="#d8d9f4" />
        <path d="M25 3H13Q5 3 5 11V25H25ZM25 47H37Q45 47 45 39V25H25Z" fill="#8f86cf" />
        <path d="M25 0L39 12V38L25 50L11 38V12Z" fill="#dcdcf5" />
        <path d="M25 0L39 12V25H25ZM25 50L11 38V25H25Z" fill="#b0a9e0" />
        <path d="M25 8L35 14V36L25 42L15 36V14Z" fill="#dfdff7" />
        <text x="25.500" y="36.500" textAnchor="middle" className="font-['Liberation_Serif',serif] font-bold" fontSize="33" fill="#0b0b4a">B</text>
    </svg>
);

const DocumentsIcon = () => (
    <svg className="overflow-visible" viewBox="0 0 50 50">
        <rect width="50" height="50" rx="12" fill="#fff" />
        <text x="27" y="42.500" textAnchor="middle" className="font-['Inter',sans-serif] font-extrabold" fontSize="47" fill="#1c1b20">D</text>
        <path d="M11.500 8.500H18L13.500 36L12 38Z" fill="#f5a23c" />
        <path d="M18.500 8.500L23.500 14L13 38Z" fill="#3fae35" />
        <path d="M22 50Q38 47 50 35V38Q50 50 38 50Z" fill="#1e8fe8" />
        <path d="M35 50Q45 47 50 40Q49 50 38 50Z" fill="#f2cf4a" />
    </svg>
);

const DownloadIcon = () => (
    <svg className="overflow-visible" viewBox="0 0 50 50" fill="none" stroke="#3f87ab" strokeWidth="2.800" strokeLinecap="round" strokeLinejoin="round">
        <circle cx="25" cy="20.500" r="20.800" />
        <path d="M25 10.500V30M17.500 23L25 30.500L32.500 23" />
    </svg>
);

const IMovieIcon = () => (
    <svg viewBox="0 0 50 50">
        <defs>
            <linearGradient id="imovie" x1="0" y1="0" x2="0" y2="1">
                <stop offset="0" stopColor="#1a1580" /><stop offset="1" stopColor="#a252d2" />
            </linearGradient>
        </defs>
        <rect width="50" height="50" rx="12" fill="url(#imovie)" />
        <path d="M25 7L29.500 19.500L43.500 20L32.500 28.500L36.500 42L25 34L13.500 42L17.500 28.500L6.500 20L20.500 19.500Z" fill="#ece2fa" />
        <path d="M19.500 22H27V30H19.500ZM28 26L31.500 22.500V29.500Z" fill="#4a2ba6" />
    </svg>
);

const ObsidianIcon = () => (
    <svg viewBox="0 0 50 50">
        <rect width="50" height="50" rx="12" fill="#17171a" />
        <path d="M26 4L34 10Q34 17 41 28Q41 34 36 36L34 46L20 43L9 34L14 23Q12 16 15 13Z" fill="#8e63e0" />
        <path d="M26 4Q27 17 22 24L14 23Q12 16 15 13Z" fill="#c4a5f7" />
        <path d="M26 4L34 10Q34 17 41 28L34 33Q29 26 22 24Q27 17 26 4Z" fill="#a785ee" />
        <path d="M14 23Q20 25 20 43L9 34Z" fill="#6a3fc0" />
        <path d="M20 31Q30 29 36 36L34 46L20 43Z" fill="#7a4dd4" />
    </svg>
);

const PagesIcon = () => (
    <svg viewBox="0 0 50 50">
        <defs>
            <linearGradient id="pages" x1="0" y1="0" x2="0" y2="1">
                <stop offset="0" stopColor="#ffb02b" /><stop offset="1" stopColor="#fb821d" />
            </linearGradient>
        </defs>
        <rect width="50" height="50" rx="12" fill="url(#pages)" />
        <path d="M39 11L27 24" stroke="#fff" strokeWidth="4.500" strokeLinecap="round" />
        <path d="M23 23.500L28 28L14 40L8.500 42L10.500 37Z" fill="#fff" />
        <path d="M22.500 22.500L29 28.500" stroke="#fb9a25" strokeWidth="1.200" />
        <path d="M14 42.500H42" stroke="#ffd9a0" strokeWidth="1.200" />
    </svg>
);

const ScannerIcon = () => (
    <svg viewBox="0 0 50 50">
        <clipPath id="scan-clip"><rect width="50" height="50" rx="12" /></clipPath>
        <g clipPath="url(#scan-clip)">
            <rect width="50" height="50" fill="#1f67dc" />
            <path d="M0 0H22L10 50H0Z" fill="#2585ea" />
            <path d="M24 50Q38 46 50 34V50Z" fill="#1e8fe8" />
            <path d="M34 50Q42 47 50 40V50Z" fill="#f2cf4a" />
            <path d="M16 5L33 7L39 27L23 23Z" fill="#1b56c4" stroke="#fff" strokeWidth="2" strokeLinejoin="round" />
            <path d="M22 24L40 27V31L28 46L8 40V37Z" fill="#eaf1fb" stroke="#fff" strokeWidth="1.500" strokeLinejoin="round" />
            <path d="M22 27L36 29L27 41L12 37Z" fill="#fff" stroke="#3b82d8" strokeWidth="1.300" />
            <path d="M26.500 29.500L31.500 30.500L29.500 33L25 32Z" fill="#3a2f35" />
        </g>
    </svg>
);

const files: { lines: string[]; info: string; cloud?: boolean; paper?: boolean; icon?: ReactNode }[] = [
    { lines: ['Audio'], info: '1 elemento', paper: true },
    { lines: ['BBEdit'], info: '1 elemento', cloud: true, paper: true, icon: <BBEditIcon /> },
    { lines: ['DOC'], info: '8 elementi', cloud: true, paper: true },
    { lines: ['Documents', 'by Readdle'], info: '0 elementi', icon: <DocumentsIcon /> },
    { lines: ['Download'], info: '0 elementi', icon: <DownloadIcon /> },
    { lines: ['iMovie'], info: '0 elementi', cloud: true, icon: <IMovieIcon /> },
    { lines: ['Obsidian'], info: '1 elemento', paper: true, icon: <ObsidianIcon /> },
    { lines: ['Pages'], info: '0 elementi', cloud: true, icon: <PagesIcon /> },
    { lines: ['Scanner By', 'Readdle'], info: '0 elementi', cloud: true, icon: <ScannerIcon /> },
];

const FileTile = ({ file }: { file: (typeof files)[number] }) => (
    <div className="flex flex-col items-center text-center">
        <div className="relative w-[115px] h-[94px]">
            <FolderShape tone="blue" paper={file.paper} />
            {file.icon && <div className="absolute left-[32.500px] top-[31px] w-[50px] h-[50px]">{file.icon}</div>}
        </div>
        <div className="mt-[25px] text-[24.500px] leading-[33px] tracking-[-0.4px] whitespace-nowrap">
            {file.lines.map((line, i) => (
                <div key={line}>
                    {line}
                    {file.cloud && i === file.lines.length - 1 && <CloudDown />}
                </div>
            ))}
        </div>
        <div className="text-[20.500px] leading-[31px] text-[#98989c]">{file.info}</div>
    </div>
);

const FolderTab = ({ color, line }: { color: string; line: string }) => (
    <>
        <path d="M0 5Q0 1 4 1H10Q12 1 13.500 2.500L15 4H35Q39 4.500 39 8V28Q39 32 35 32H4Q0 32 0 28Z" fill={color} />
        <path d="M3.500 9H35.500" stroke={line} strokeWidth="2" />
    </>
);

const Browser = () => (
    <Phone time="12:31" light>
        <div className="relative h-[176px] px-[23.500px]">
            <div className="flex items-center justify-between">
                <RoundButton>{backChevron}</RoundButton>
                <h1 className="h-[65px] pt-[2px] flex items-center text-[28px] font-semibold tracking-[-0.6px]">iCloud Drive</h1>
                <RoundButton>
                    <circle cx="19" cy="33" r="3.700" /><circle cx="32.500" cy="33" r="3.700" /><circle cx="45.500" cy="33" r="3.700" />
                </RoundButton>
            </div>
            <div className="mt-[17px] h-[72px] rounded-full bg-[#fefefe] shadow-[0_8px_24px_2px_rgba(0,0,0,0.05)] flex items-center pl-[20px] pr-[27px] text-[#8a8a8d]">
                <svg className="w-[28px] h-[29px]" viewBox="0 0 28 29" fill="none" stroke="#8a8a8d" strokeLinecap="round">
                    <circle cx="11.500" cy="12" r="10" strokeWidth="2.400" />
                    <path d="M19 20L26 27" strokeWidth="3.400" />
                </svg>
                <span className="ml-[15px] pt-[2px] text-[27px] tracking-[-0.6px]">Cerca</span>
                <svg className="ml-auto w-[23px] h-[32px]" viewBox="0 0 23 32" fill="none" stroke="#8a8a8d" strokeWidth="2.200" strokeLinecap="round">
                    <rect x="7" y="1.500" width="9" height="19" rx="4.500" />
                    <path d="M2 13.500V16Q2.500 24.500 11.500 24.500T21 16V13.500M11.500 25V30M5 30.500H18" />
                </svg>
            </div>
        </div>
        <div className="relative h-[1018px] pt-[38px] px-[8.500px] grid grid-cols-3 auto-rows-[315px] overflow-hidden">
            {files.map((file) => <FileTile key={file.lines[0]} file={file} />)}
            {/* next row, fading out behind the tab bar */}
            <div className="ml-[65px] -mt-[17px] w-[57px] h-[70px] border border-[#e4e4e4] opacity-70">
                <svg className="w-full h-full" viewBox="0 0 57 70" fill="none" stroke="#b5b5b8"><path d="M22 54L30 47M26 50V60M34 42L46 54M40 40L38 56M34 50L48 46" /></svg>
            </div>
            <div className="relative mx-auto w-[115px] h-[94px] opacity-70">
                <FolderShape tone="blue" />
                <div className="absolute left-[35px] top-[31px] w-[45px] h-[50px] rounded-[12px] bg-[#b06fc0]" />
            </div>
        </div>
        <div className="absolute inset-x-0 bottom-0 h-[170px] bg-gradient-to-b from-white/0 via-[#fbfbfb]/60 to-[#fbfbfb]/70" />
        <nav className="absolute left-[85.500px] bottom-[31px] w-[407px] h-[93px] rounded-full bg-[#fefefe] shadow-[0_8px_40px_6px_rgba(0,0,0,0.07)] flex items-center pl-[5.500px] text-[14.500px] font-semibold text-[#161616]">
            <div className="shrink-0 w-[140px] h-[81px] flex flex-col items-center pt-[13px]">
                <svg className="w-[35px] h-[35px]" viewBox="0 0 35 35">
                    <circle cx="17.500" cy="17.500" r="17.500" fill="#1a181a" />
                    <path d="M17.500 7V19H8" fill="none" stroke="#fff" strokeWidth="2" strokeLinecap="round" />
                </svg>
                <span className="mt-[6px] leading-[18px]">Recenti</span>
            </div>
            <div className="-ml-[12px] shrink-0 w-[140px] h-[81px] flex flex-col items-center pt-[13px]">
                <svg className="ml-[8px] w-[46px] h-[35px] overflow-visible" viewBox="0 0 46 35">
                    <g transform="translate(0 1)"><FolderTab color="#1a181a" line="#fff" /></g>
                    <circle cx="37" cy="10" r="9.300" fill="#1a181a" stroke="#fff" strokeWidth="2" />
                    <circle cx="37" cy="7.500" r="2.700" fill="#fff" />
                    <path d="M31.500 14.500Q33 11.500 37 11.500T42.500 14.500Q40 17 37 17T31.500 14.500Z" fill="#fff" />
                </svg>
                <span className="mt-[6px] leading-[18px]">Condivisi</span>
            </div>
            <div className="-ml-[12px] shrink-0 w-[140px] h-[81px] rounded-full bg-[#ebebeb] flex flex-col items-center pt-[13px] text-[#007aff]">
                <svg className="w-[39px] h-[35px]" viewBox="0 0 39 35"><g transform="translate(0 1)"><FolderTab color="#007dfb" line="#e4f1fd" /></g></svg>
                <span className="mt-[6px] leading-[18px]">Sfoglia</span>
            </div>
        </nav>
    </Phone>
);

const App = () => (
    <div className="relative w-[2400px] h-[1318px] overflow-hidden bg-[#a8a8a8] pl-[26.500px] pt-[27px] flex gap-[11.500px] font-['Inter',sans-serif] text-black">
        <IconPicker selected />
        <IconPicker />
        <TagList />
        <Browser />

        {/* callouts */}
        <div className="absolute left-[10px] top-[1101px] w-[332px] h-[151px] rounded-[60px] border-[23px] border-[#ff9500]" />
        <div className="absolute left-[604px] top-[322px] w-[167px] h-[151px] rounded-[58px] border-[23px] border-[#ff9500]" />
        <div className="absolute left-[1199px] top-[300px] w-[151px] h-[148px] rounded-[58px] border-[23px] border-[#ff9500]" />
        <div className="absolute left-[1643px] top-[77px] w-[177px] h-[159px] rounded-[62px] border-[25px] border-[#ff9500]" />
        <svg className="absolute left-[1795px] top-[80px] w-[200px] h-[220px]" viewBox="1795 80 200 220">
            <path d="M1808 124C1870 94 1908 115 1911 162" fill="none" stroke="#ff9500" strokeWidth="26" />
            <path d="M1847 151.500L1973 166L1895 285Z" fill="#ff9500" />
        </svg>
    </div>
);

export default App;
